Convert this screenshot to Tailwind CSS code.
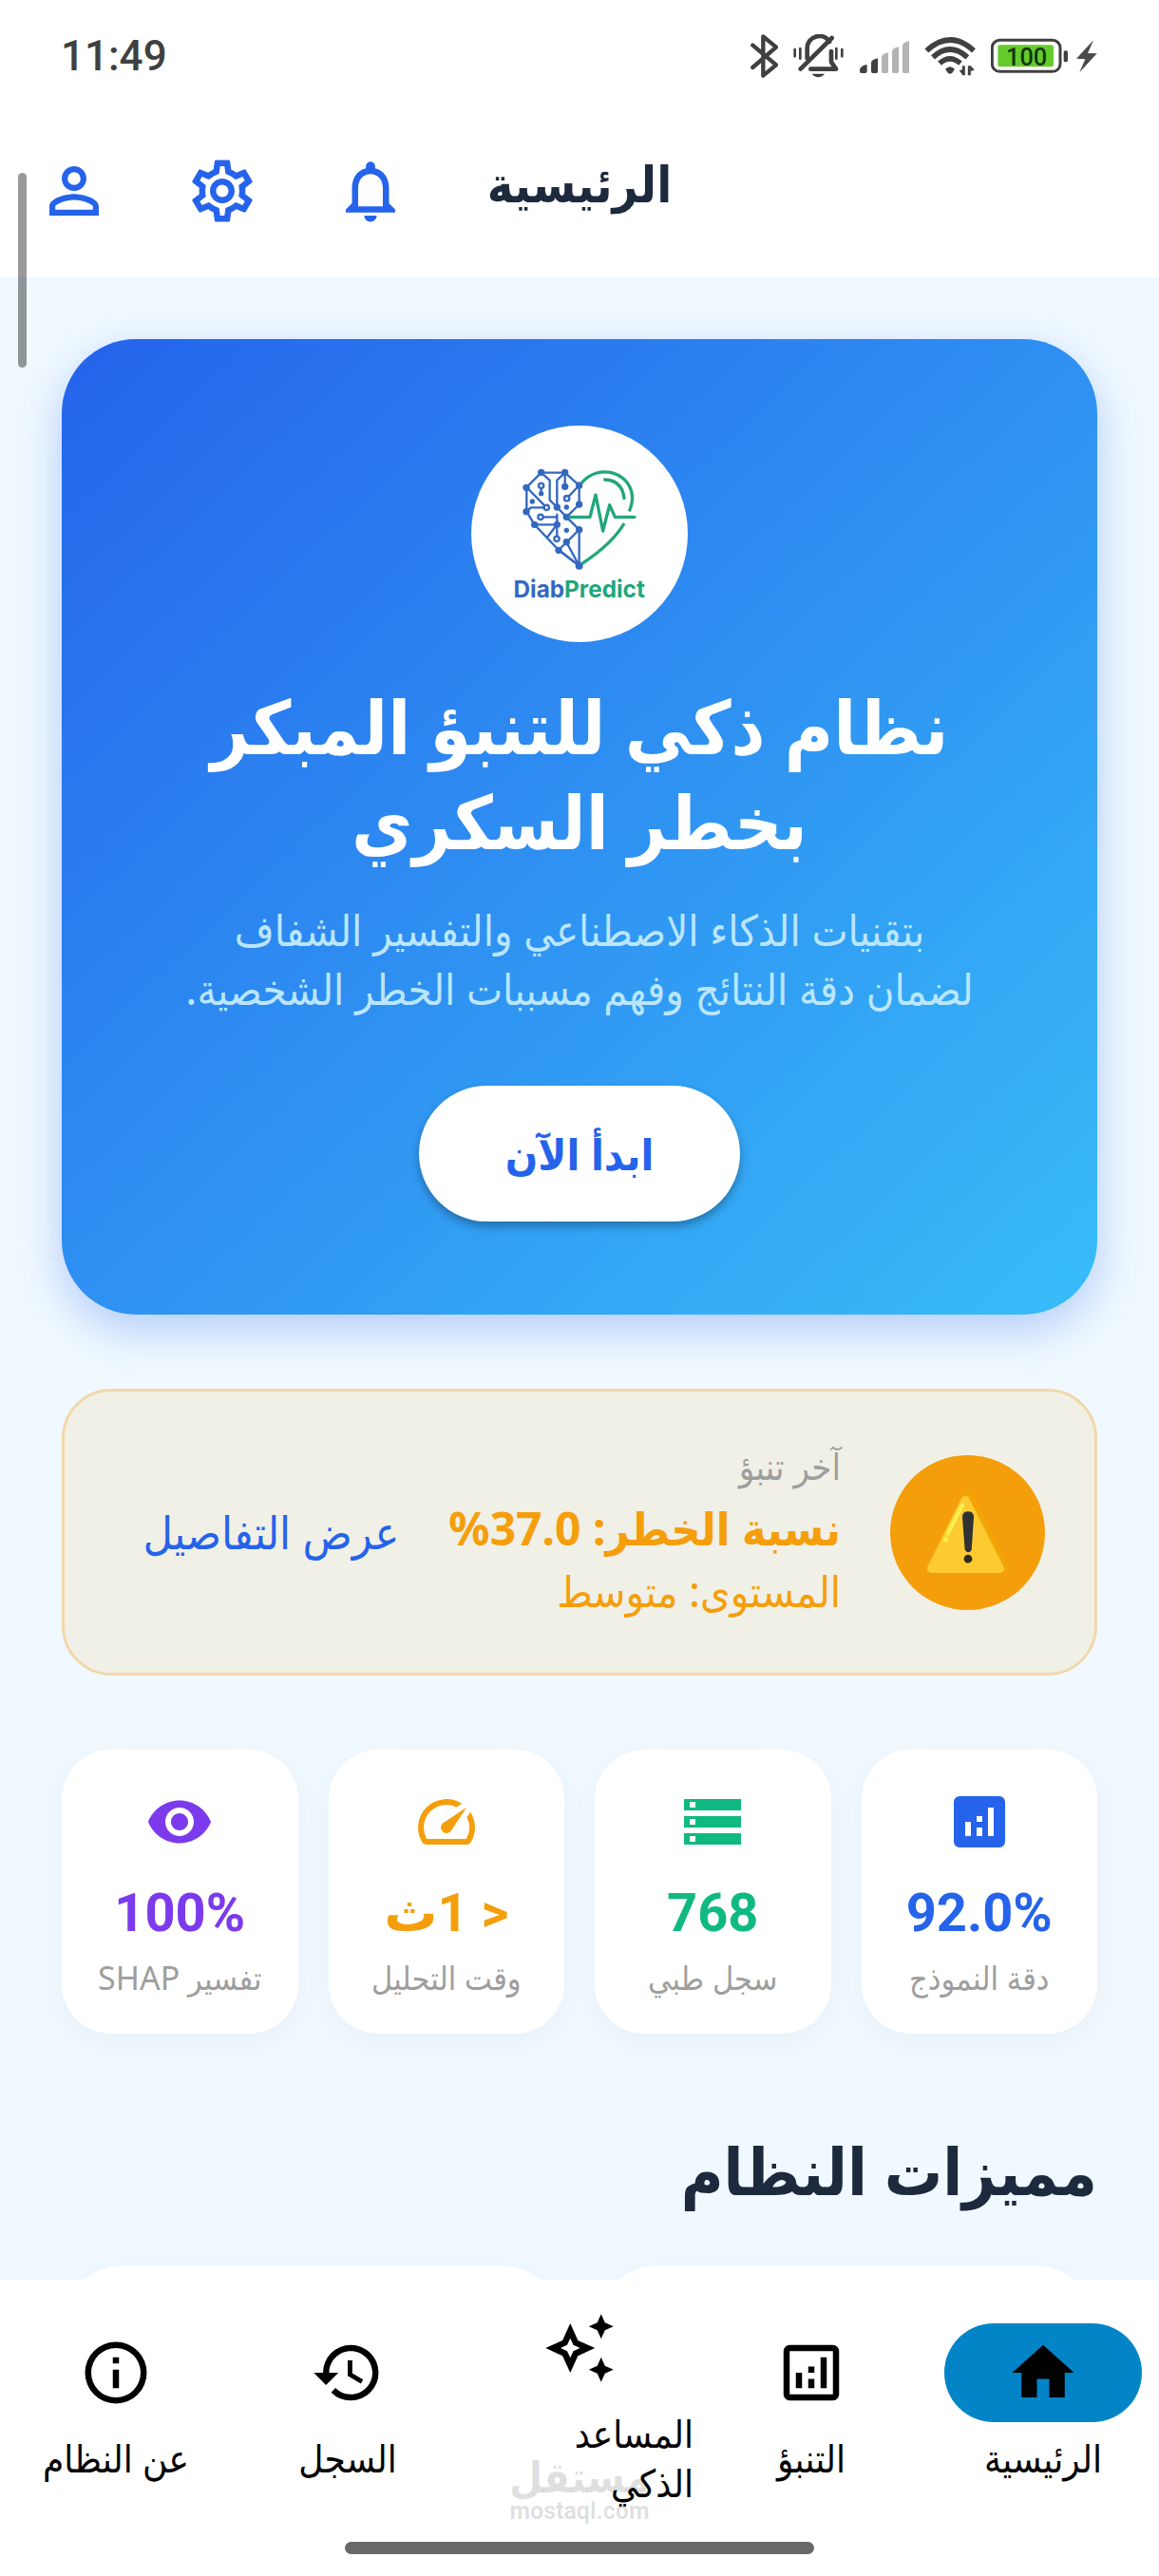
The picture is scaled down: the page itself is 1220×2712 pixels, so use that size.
<!DOCTYPE html>
<html lang="ar" dir="rtl">
<head>
    <meta charset="UTF-8">
    <meta name="viewport" content="width=device-width, initial-scale=1.0">
    <title>DiabPredict - الرئيسية</title>
    <script src="https://cdn.jsdelivr.net/npm/@tailwindcss/browser@4"></script>
</head>
<body class="h-screen flex flex-col overflow-hidden bg-sky-50 text-slate-800 font-['Noto_Sans','DejaVu_Sans_Condensed','DejaVu_Sans',sans-serif]">

    <!-- Device status bar -->
    <div dir="ltr" class="shrink-0 h-[110px] pt-2 px-16 flex items-center justify-between bg-white text-neutral-700">
        <span class="text-[44px] leading-none font-medium font-['Roboto',sans-serif]">11:49</span>
        <div class="flex items-center gap-4">
            <svg class="h-[46px]" viewBox="92 47 88 138" fill="none" stroke="currentColor" stroke-width="13" stroke-linecap="round" stroke-linejoin="round"><path d="M99 82l74 62-41 34V54l41 34-74 64"/></svg>
            <svg class="h-[46px]" viewBox="233 50 160 138" fill="none" stroke="currentColor" stroke-width="14" stroke-linecap="round" stroke-linejoin="round">
                <path d="M277 126V96c0-42 52-54 70-22M355 62L256 160M288 160h80l-15-22v-34"/>
                <path d="M238 98v22M255 95v32M369 95v32M387 98v22" stroke-width="8"/>
                <path d="M292 175h40c-8 14-32 14-40 0z" fill="currentColor" stroke="none"/>
            </svg>
            <svg class="h-[46px]" viewBox="438 47 158 138" fill="currentColor">
                <path d="M438 161q0-14 23-18v22q0 5-5 5h-13q-5 0-5-5zM474 136q4-10 21-13v42q0 5-5 5h-11q-5 0-5-5z"/>
                <path class="fill-[#b3b3b3]" d="M507 118q4-10 21-13v60q0 5-5 5h-11q-5 0-5-5zM540 100q4-10 21-13v78q0 5-5 5h-11q-5 0-5-5zM573 82q4-10 21-13v96q0 5-5 5h-11q-5 0-5-5z"/>
            </svg>
            <svg class="h-[46px]" viewBox="638 50 162 138" fill="none" stroke="currentColor" stroke-width="17">
                <path d="M645 102q75-68 149 0M665 123q54-50 109 0M686 142q33-29 66 0"/>
                <path d="M704 160q15-15 30 0l-8 12q-7 6-14 0z" fill="currentColor" stroke="none"/>
                <path d="M762 180V150M780 180V150" stroke-width="9"/><path d="M748 165l12-4v19zM796 163l-12 4v-19z" fill="currentColor" stroke="none"/>
            </svg>
            <svg class="h-[46px]" viewBox="853 47 338 138">
                <rect x="857" y="66" width="215" height="99" rx="24" fill="#fff" stroke="#404040" stroke-width="9"/>
                <rect x="875" y="81" width="176" height="69" rx="8" fill="#65cb2c"/>
                <rect x="1083" y="99" width="13" height="36" rx="5" fill="#404040"/>
                <text x="966" y="145" text-anchor="middle" font-size="76" font-weight="500" fill="#12350a" class="font-['Roboto',sans-serif]">100</text>
                <path d="M1177 66l-54 58 28 2-18 42 55-60-29-1z" fill="#4a4a4a"/>
            </svg>
        </div>
    </div>

    <header class="shrink-0 h-[182px] grid grid-cols-[1fr_auto_1fr] items-center bg-white">
        <div></div>
        <h1 class="pb-4 text-[52px] leading-[64px] font-bold">الرئيسية</h1>
        <div class="flex justify-end text-[#2563eb]">
            <button type="button" aria-label="الإشعارات" class="w-[156px] h-[156px] flex items-center justify-center">
                <svg class="size-[78px]" viewBox="0 0 24 24" fill="currentColor"><path d="M12 22c1.100 0 2-.9 2-2h-4c0 1.100.89 2 2 2zm6-6v-5c0-3.070-1.640-5.640-4.500-6.320V4c0-.83-.67-1.500-1.500-1.500s-1.500.67-1.500 1.500v.68C7.630 5.360 6 7.920 6 11v5l-2 2v1h16v-1l-2-2zm-2 1H8v-6c0-2.480 1.510-4.500 4-4.500s4 2.020 4 4.500v6z"/></svg>
            </button>
            <button type="button" aria-label="الإعدادات" class="w-[156px] h-[156px] flex items-center justify-center">
                <svg class="size-[78px]" viewBox="0 0 24 24" fill="currentColor"><path d="M19.430 12.980c.04-.32.07-.64.07-.98 0-.34-.03-.66-.07-.98l2.110-1.650c.19-.15.24-.42.12-.64l-2-3.460c-.09-.16-.26-.25-.44-.25-.06 0-.12.010-.17.030l-2.490 1c-.52-.4-1.080-.73-1.690-.98l-.38-2.650C14.460 2.180 14.250 2 14 2h-4c-.25 0-.46.18-.49.42l-.38 2.650c-.61.25-1.170.59-1.690.98l-2.490-1c-.06-.02-.12-.03-.18-.03-.17 0-.34.09-.43.25l-2 3.460c-.13.22-.07.49.12.64l2.110 1.650c-.04.32-.07.65-.07.98 0 .33.03.66.07.98l-2.110 1.650c-.19.15-.24.42-.12.64l2 3.460c.09.16.26.25.44.25.06 0 .12-.01.17-.03l2.490-1c.52.4 1.080.73 1.690.98l.38 2.650c.03.24.24.42.49.42h4c.25 0 .46-.18.49-.42l.38-2.650c.61-.25 1.170-.59 1.690-.98l2.490 1c.06.02.12.03.18.03.17 0 .34-.09.43-.25l2-3.460c.12-.22.07-.49-.12-.64l-2.110-1.650zm-1.980-1.710c.04.31.05.52.05.73 0 .21-.02.43-.05.73l-.14 1.130.89.7 1.080.84-.7 1.210-1.270-.51-1.040-.42-.9.68c-.43.32-.84.56-1.250.73l-1.060.43-.16 1.130-.2 1.350h-1.400l-.19-1.350-.16-1.130-1.060-.43c-.43-.18-.83-.41-1.230-.71l-.91-.7-1.060.43-1.270.51-.7-1.210 1.080-.84.89-.7-.14-1.130c-.03-.31-.05-.54-.05-.74s.02-.43.05-.73l.14-1.130-.89-.7-1.080-.84.7-1.210 1.270.51 1.040.42.9-.68c.43-.32.84-.56 1.250-.73l1.060-.43.16-1.130.2-1.350h1.390l.19 1.350.16 1.130 1.060.43c.43.18.83.41 1.230.71l.91.7 1.060-.43 1.270-.51.7 1.210-1.070.85-.89.7.14 1.130zM12 8c-2.210 0-4 1.790-4 4s1.790 4 4 4 4-1.790 4-4-1.790-4-4-4zm0 6c-1.100 0-2-.9-2-2s.9-2 2-2 2 .9 2 2-.9 2-2 2z"/></svg>
            </button>
            <button type="button" aria-label="الملف الشخصي" class="w-[156px] h-[156px] flex items-center justify-center">
                <svg class="size-[78px]" viewBox="0 0 24 24" fill="currentColor"><path d="M12 5.900a2.100 2.100 0 1 1 0 4.200 2.100 2.100 0 0 1 0-4.200m0 9c2.970 0 6.100 1.460 6.100 2.100v1.100H5.900V17c0-.64 3.130-2.100 6.100-2.100M12 4C9.790 4 8 5.790 8 8s1.790 4 4 4 4-1.790 4-4-1.790-4-4-4zm0 9c-2.670 0-8 1.340-8 4v3h16v-3c0-2.660-5.330-4-8-4z"/></svg>
            </button>
        </div>
    </header>

    <main class="flex-1 min-h-0 overflow-hidden px-[65px] pt-[65px]">
        <section class="rounded-[78px] bg-linear-to-br/srgb from-[#2563eb] to-[#38bdf8] shadow-[0_16px_48px_rgba(37,99,235,0.3)] px-[91px] pt-[91px] pb-[98px] flex flex-col items-center text-center">
            <div class="size-[228px] rounded-full bg-white">
                <svg dir="ltr" viewBox="48 53 684 684" fill="none" stroke-linecap="round" stroke-linejoin="round">
                    <g stroke="#3468c0" stroke-width="7">
                        <path d="M269 202H344L389 242V302L349 342L389 382V496L324 446L248 366L223 325V248L269 202"/>
                        <path d="M269 202L296 226V288L319 311L349 342M344 202L319 226V311M344 202V246M389 242L350 283M223 248L286 312H236L223 325M269 243V268M267 342H319M319 334V410M248 366H319L288 406M389 382L349 422L324 446M349 422L389 496M324 446L389 496"/>
                        <g fill="#fff"><circle cx="269" cy="243" r="8"/><circle cx="350" cy="283" r="8"/><circle cx="286" cy="312" r="8"/><circle cx="267" cy="342" r="8"/><circle cx="318" cy="411" r="8"/></g>
                        <g fill="#3468c0" stroke="none"><circle cx="269" cy="201" r="11"/><circle cx="344" cy="201" r="11"/><circle cx="389" cy="242" r="11"/><circle cx="222" cy="249" r="11"/><circle cx="344" cy="246" r="11"/><circle cx="389" cy="302" r="11"/><circle cx="319" cy="311" r="11"/><circle cx="349" cy="342" r="11"/><circle cx="222" cy="325" r="11"/><circle cx="248" cy="366" r="11"/><circle cx="319" cy="366" r="11"/><circle cx="389" cy="382" r="11"/><circle cx="349" cy="421" r="11"/><circle cx="324" cy="447" r="11"/><circle cx="389" cy="496" r="12"/><circle cx="269" cy="268" r="8"/><circle cx="241" cy="293" r="8"/><circle cx="349" cy="311" r="8"/><circle cx="349" cy="384" r="8"/></g>
                    </g>
                    <g stroke="#22a67c" stroke-width="10">
                        <path d="M397 234C450 170 556 200 557 284Q556 304 547 324M531 362Q495 425 397 490" stroke-linecap="butt"/>
                        <path d="M470 224Q525 226 531 283M360 342H423L441 272L464 386L485 304L502 342H564"/>
                    </g>
                    <text x="389" y="596" text-anchor="middle" font-size="73" font-weight="700" class="font-['Inter',sans-serif]"><tspan fill="#3468c0">Diab</tspan><tspan fill="#22a67c">Predict</tspan></text>
                </svg>
            </div>
            <h2 class="mt-[38px] text-[78px] leading-[100px] font-bold text-white">نظام ذكي للتنبؤ المبكر<br>بخطر السكري</h2>
            <p class="mt-[34px] text-[45px] leading-[62px] text-[#bae6fd]">بتقنيات الذكاء الاصطناعي والتفسير الشفاف<br>لضمان دقة النتائج وفهم مسببات الخطر الشخصية.</p>
            <button type="button" class="mt-[71px] h-[143px] px-[91px] rounded-full bg-white text-[#2563eb] text-[45px] leading-[64px] font-bold shadow-[0_5px_10px_rgba(0,0,0,0.3)]">ابدأ الآن</button>
        </section>

        <!-- Last prediction -->
        <section class="mt-[78px] h-[302px] rounded-[52px] border-3 border-[#f1d8ab] bg-[#f0f0e6] px-[52px] flex items-center">
            <div class="shrink-0 size-[163px] rounded-full bg-[#f59e0b] flex items-center justify-center">
                <svg class="size-[86px]" viewBox="138 150 256 256">
                    <path d="M250 160q14-16 30 0l110 224q6 20-14 22h-110z" fill="#f2a507"/>
                    <path d="M246 170q10-12 22 0l109 216q5 18-12 20H152q-19-3-12-22z" fill="#fdca32"/>
                    <path d="M248 194L203 283" stroke="#fff04d" stroke-width="12" stroke-linecap="round"/><circle cx="196" cy="301" r="8" fill="#fff04d"/>
                    <path d="M248 229q2-16 18-16t18 16l-7 105q-10 15-21 0z" fill="#303234"/><circle cx="266" cy="362" r="13" fill="#2b2a1c"/>
                </svg>
            </div>
            <div class="ms-[52px] pb-2 text-[#f59e0b]">
                <p class="text-[38px] leading-[62px] text-[#9e9e9e]">آخر تنبؤ</p>
                <p class="text-[48px] leading-[70px] font-bold">نسبة الخطر: 37.0%</p>
                <p class="text-[45px] leading-[62px]">المستوى: متوسط</p>
            </div>
            <a href="#" class="ms-[52px] text-[48px] leading-[64px] text-[#2563eb]">عرض التفاصيل</a>
        </section>

        <section class="mt-[78px] grid grid-cols-4 gap-8 text-center text-[34px] leading-[48px] text-[#9e9e9e]">
            <div class="h-[299px] pt-10 rounded-[52px] bg-white shadow-[0_8px_32px_rgba(0,0,0,0.04)] flex flex-col items-center">
                <svg class="size-[72px] text-[#2563eb]" viewBox="0 0 24 24" fill="currentColor"><path fill-rule="evenodd" d="M5 3h14a2 2 0 0 1 2 2v14a2 2 0 0 1-2 2H5a2 2 0 0 1-2-2V5a2 2 0 0 1 2-2zM7 12v5h2v-5zM15 7v10h2V7zM11 10v2h2v-2zM11 14v3h2v-3z"/></svg>
                <p dir="ltr" class="mt-6 text-[56px] leading-[72px] font-bold text-[#2563eb] font-['Roboto',sans-serif]">92.0%</p>
                <p class="mt-2">دقة النموذج</p>
            </div>
            <div class="h-[299px] pt-10 rounded-[52px] bg-white shadow-[0_8px_32px_rgba(0,0,0,0.04)] flex flex-col items-center">
                <svg class="size-[72px] text-[#10b981]" viewBox="0 0 24 24" fill="currentColor"><path fill-rule="evenodd" d="M2 4h20v4H2zM4 5v2h2V5zM2 10h20v4H2zM4 11v2h2v-2zM2 16h20v4H2zM4 17v2h2v-2z"/></svg>
                <p class="mt-6 text-[56px] leading-[72px] font-bold text-[#10b981] font-['Roboto',sans-serif]">768</p>
                <p class="mt-2">سجل طبي</p>
            </div>
            <div class="h-[299px] pt-10 rounded-[52px] bg-white shadow-[0_8px_32px_rgba(0,0,0,0.04)] flex flex-col items-center">
                <svg class="size-[72px] text-[#f59e0b]" viewBox="0 0 24 24" fill="currentColor"><path d="M20.380 8.570l-1.230 1.850a8 8 0 0 1-.22 7.580H5.070A8 8 0 0 1 15.580 6.850l1.850-1.230A10 10 0 0 0 3.350 19a2 2 0 0 0 1.720 1h13.850a2 2 0 0 0 1.740-1 10 10 0 0 0-.27-10.440zM10.590 15.410a2 2 0 0 0 2.830 0l5.660-8.490-8.490 5.660a2 2 0 0 0 0 2.830z"/></svg>
                <p class="mt-6 text-[56px] leading-[72px] font-bold text-[#f59e0b] font-['Roboto','Noto_Sans','DejaVu_Sans',sans-serif]">&lt; 1ث</p>
                <p class="mt-2">وقت التحليل</p>
            </div>
            <div class="h-[299px] pt-10 rounded-[52px] bg-white shadow-[0_8px_32px_rgba(0,0,0,0.04)] flex flex-col items-center">
                <svg class="size-[72px] text-[#7c3aed]" viewBox="0 0 24 24" fill="currentColor"><path d="M12 4.500C7 4.500 2.730 7.610 1 12c1.730 4.390 6 7.500 11 7.500s9.270-3.110 11-7.500c-1.730-4.390-6-7.500-11-7.500zM12 17c-2.760 0-5-2.240-5-5s2.240-5 5-5 5 2.240 5 5-2.240 5-5 5zm0-8c-1.660 0-3 1.340-3 3s1.340 3 3 3 3-1.340 3-3-1.340-3-3-3z"/></svg>
                <p dir="ltr" class="mt-6 text-[56px] leading-[72px] font-bold text-[#7c3aed] font-['Roboto',sans-serif]">100%</p>
                <p class="mt-2">تفسير SHAP</p>
            </div>
        </section>

        <h2 class="mt-[94px] text-[68px] leading-[100px] font-bold">مميزات النظام</h2>
        <section class="mt-[50px] grid grid-cols-2 gap-9">
            <div class="h-[300px] rounded-[65px] bg-white shadow-[0_8px_32px_rgba(0,0,0,0.04)]"></div>
            <div class="h-[300px] rounded-[65px] bg-white shadow-[0_8px_32px_rgba(0,0,0,0.04)]"></div>
        </section>
    </main>

    <div class="fixed left-[19px] top-[182px] w-[9px] h-[205px] rounded-full bg-black/40"></div>

    <nav class="relative shrink-0 h-[312px] bg-white text-black text-[40px] leading-[52px]">
        <div class="grid grid-cols-5 h-[260px]">
            <a href="#" class="flex flex-col items-center justify-center">
                <span class="w-[208px] h-[104px] rounded-full bg-[#0284c7] flex items-center justify-center">
                    <svg class="size-[78px]" viewBox="0 0 24 24" fill="currentColor"><path d="M10 20v-6h4v6h5v-8h3L12 3 2 12h3v8z"/></svg>
                </span>
                <span class="mt-3">الرئيسية</span>
            </a>
            <a href="#" class="flex flex-col items-center justify-center">
                <span class="h-[104px] flex items-center">
                    <svg class="size-[78px]" viewBox="0 0 24 24" fill="currentColor"><path fill-rule="evenodd" d="M5 3h14a2 2 0 0 1 2 2v14a2 2 0 0 1-2 2H5a2 2 0 0 1-2-2V5a2 2 0 0 1 2-2zM5 5v14h14V5zM7 12h2v5H7zM15 7h2v10h-2zM11 10h2v2h-2zM11 14h2v3h-2z"/></svg>
                </span>
                <span class="mt-3">التنبؤ</span>
            </a>
            <a href="#" class="flex flex-col items-center justify-center">
                <span class="h-[104px] flex items-center">
                    <svg class="size-[78px]" viewBox="0 0 24 24" fill="currentColor"><path d="M19 9l1.250-2.750L23 5l-2.750-1.250L19 1l-1.250 2.750L15 5l2.750 1.250zM19 15l-1.250 2.750L15 19l2.750 1.250L19 23l1.250-2.750L23 19l-2.750-1.250zM11.500 9.500L9 4 6.500 9.500 1 12l5.500 2.500L9 20l2.500-5.500L17 12zm-1.510 3.490L9 15.170l-.99-2.180L5.830 12l2.180-.99L9 8.830l.99 2.180 2.180.99z"/></svg>
                </span>
                <span class="mt-3 w-[240px]">المساعد<br>الذكي</span>
            </a>
            <a href="#" class="flex flex-col items-center justify-center">
                <span class="h-[104px] flex items-center">
                    <svg class="size-[78px]" viewBox="0 0 24 24" fill="currentColor"><path d="M13 3a9 9 0 0 0-9 9H1l3.890 3.890.07.14L9 12H6c0-3.870 3.130-7 7-7s7 3.130 7 7-3.130 7-7 7c-1.930 0-3.680-.79-4.940-2.060l-1.420 1.420A8.950 8.950 0 0 0 13 21a9 9 0 0 0 0-18zm-1 5v5l4.250 2.520.77-1.280-3.520-2.090V8z"/></svg>
                </span>
                <span class="mt-3">السجل</span>
            </a>
            <a href="#" class="flex flex-col items-center justify-center">
                <span class="h-[104px] flex items-center">
                    <svg class="size-[78px]" viewBox="0 0 24 24" fill="currentColor"><path d="M11 7h2v2h-2zm0 4h2v6h-2zm1-9a10 10 0 1 0 0 20 10 10 0 0 0 0-20zm0 18a8 8 0 1 1 0-16 8 8 0 0 1 0 16z"/></svg>
                </span>
                <span class="mt-3">عن النظام</span>
            </a>
        </div>
        <div class="mx-auto mt-4 w-[494px] h-[13px] rounded-full bg-[#696969]"></div>

        <!-- Watermark -->
        <div class="absolute inset-x-0 bottom-[54px] flex flex-col items-center text-black/12 font-bold pointer-events-none">
            <span class="text-[45px] leading-[46px]">مستقل</span>
            <span class="text-[25px] leading-[28px] font-['Roboto',sans-serif]">mostaql.com</span>
        </div>
    </nav>
</body>
</html>
